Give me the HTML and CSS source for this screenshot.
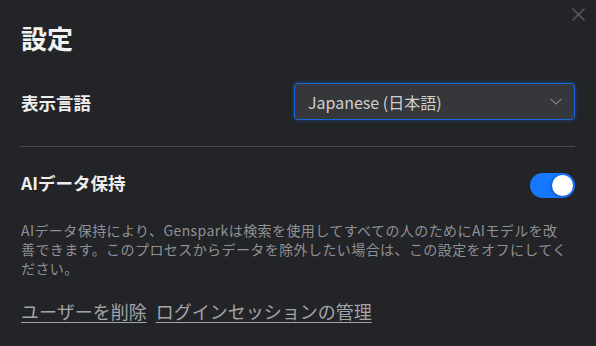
FILE: index.html
```html
<!DOCTYPE html>
<html lang="ja">
<head>
    <meta charset="UTF-8">
    <meta name="viewport" content="width=device-width, initial-scale=1.0">
    <title>設定</title>
    <link rel="stylesheet" href="styles.css">
</head>
<body>
    <div class="settings-modal">
        <button class="close-button" aria-label="閉じる">
            <svg width="13" height="13" viewBox="0 0 13 13">
                <path d="M0.5 0.5 L12.5 12.5 M12.5 0.5 L0.5 12.5" stroke="#5c5d61" stroke-width="1.4" fill="none"/>
            </svg>
        </button>

        <h1>設定</h1>

        <div class="setting-row language-row">
            <span class="setting-label">表示言語</span>
            <div class="language-select">
                <span>Japanese (日本語)</span>
                <svg width="12" height="7" viewBox="0 0 12 7">
                    <path d="M0.5 0.8 L6 6 L11.5 0.8" stroke="#85868a" stroke-width="1.1" fill="none"/>
                </svg>
            </div>
        </div>

        <div class="divider"></div>

        <div class="setting-row retention-row">
            <span class="setting-label">AIデータ保持</span>
            <div class="toggle is-on">
                <div class="toggle-knob"></div>
            </div>
        </div>

        <p class="description">AIデータ保持により、Gensparkは検索を使用してすべての人のためにAIモデルを改善できます。このプロセスからデータを除外したい場合は、この設定をオフにしてください。</p>

        <div class="account-links">
            <a href="#">ユーザーを削除</a>
            <a href="#">ログインセッションの管理</a>
        </div>
    </div>
</body>
</html>
```

FILE: styles.css
```css
* {
    margin: 0;
    padding: 0;
    box-sizing: border-box;
    font-family: "Noto Sans CJK JP", "Noto Sans", sans-serif;
}

body {
    background-color: #232427;
    min-height: 100vh;
}

.settings-modal {
    position: relative;
    padding: 20px 22px 0 21px;
    display: flex;
    flex-direction: column;
}

.close-button {
    position: absolute;
    top: 8px;
    right: 11px;
    width: 13px;
    height: 13px;
    border: none;
    background: transparent;
    display: flex;
    cursor: pointer;
}

h1 {
    font-size: 26px;
    line-height: 36px;
    font-weight: 700;
    color: #f2f2f2;
}

.setting-row {
    display: flex;
    justify-content: space-between;
    align-items: center;
}

.language-row {
    margin-top: 27px;
}

.language-row .setting-label {
    padding-top: 3px;
}

.retention-row .setting-label {
    padding-bottom: 4px;
}

.setting-label {
    font-size: 17.5px;
    line-height: 26px;
    font-weight: 700;
    color: #eeeeee;
}

.language-select {
    width: 281px;
    height: 37px;
    margin-right: -1px;
    background: #36373a;
    border: 1px solid #1668dc;
    border-radius: 4px;
    box-shadow: 0 0 4px rgba(22, 119, 255, 0.45);
    display: flex;
    align-items: center;
    justify-content: space-between;
    padding: 0 12px 0 13px;
    font-size: 16px;
    color: #cfcfcf;
}

.divider {
    height: 1px;
    background: #46474b;
    margin: 26px -1px 23px -1px;
}

.toggle {
    width: 45px;
    height: 25px;
    border-radius: 13px;
    background: #1677ff;
    display: flex;
    align-items: center;
    padding: 0 2px;
    margin-right: -1px;
}

.toggle.is-on {
    justify-content: flex-end;
}

.toggle-knob {
    width: 21px;
    height: 21px;
    border-radius: 50%;
    background: #ffffff;
    box-shadow: -1px 1px 3px rgba(0, 35, 110, 0.45);
}

.description {
    margin-top: 21px;
    margin-right: 3px;
    font-size: 14px;
    letter-spacing: 0.42px;
    line-height: 19px;
    color: #909196;
}

.account-links {
    margin-top: 21px;
    display: flex;
    gap: 9px;
}

.account-links a {
    font-size: 18px;
    line-height: 24px;
    color: #a3a4a8;
    text-decoration: underline;
    text-underline-offset: 3px;
}
```
